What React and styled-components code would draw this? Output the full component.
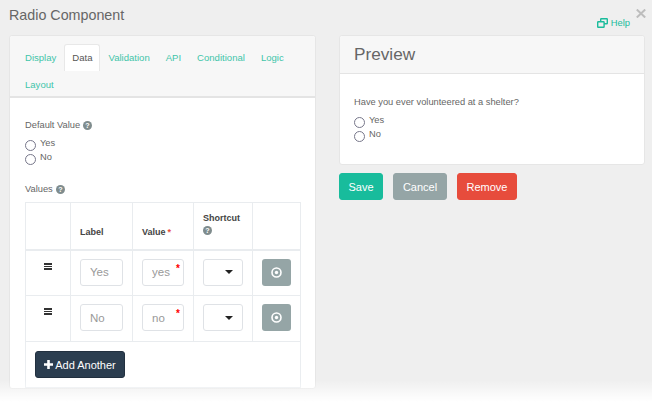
import React from "react";
import styled, { createGlobalStyle } from "styled-components";

const Global = createGlobalStyle`
  html, body { margin: 0; padding: 0; height: 100%; background: #efefef; }
  body { font-family: "Liberation Sans", Arial, sans-serif; overflow: hidden; }
  * { box-sizing: border-box; }
`;

const Page = styled.div`
  position: relative;
  width: 652px;
  height: 402px;
  overflow: hidden;
  background: #efefef;
  color: #666;
`;
const TitleBar = styled.div`
  height: 35px;
  display: flex;
  padding-left: 9px;
`;
const Title = styled.h4`
  margin: 6px 0 0;
  font-size: 14.3px;
  line-height: 18px;
  font-weight: 400;
  color: #666;
`;
const Close = styled.span`
  position: absolute;
  top: 9px;
  right: 6px;
  line-height: 0;
`;
const HelpLink = styled.a`
  position: absolute;
  top: 17px;
  right: 22px;
  display: flex;
  align-items: center;
  gap: 3px;
  font-size: 9.4px;
  line-height: 12px;
  color: #1abc9c;
`;
const Columns = styled.div`
  display: flex;
  align-items: flex-start;
  padding-left: 9px;
  gap: 23px;
`;
const Panel = styled.section`
  width: ${(p) => p.$w}px;
  background: #fff;
  border: 1px solid #e6e6e6;
  border-radius: 3px;
`;
const Tabs = styled.nav`
  background: #f7f7f7;
  border-bottom: 2px solid #e4e4e4;
  height: 62px;
  display: flex;
  flex-wrap: wrap;
  align-content: flex-start;
  padding: 8px 0 0 7px;
  border-radius: 3px 3px 0 0;
`;
const Tab = styled.span`
  height: 27px;
  padding: 0 7px 1px;
  display: flex;
  align-items: center;
  font-size: 9.55px;
  background: ${(p) => (p.$active ? "#fff" : "transparent")};
  color: ${(p) => (p.$active ? "#555" : "#1abc9c")};
  opacity: ${(p) => (p.$active ? 1 : 0.85)};
  border-radius: 3px 3px 0 0;
  border: 1px solid ${(p) => (p.$active ? "#e8e8e8" : "transparent")};
  border-bottom: 0;
`;
const Body = styled.div`
  padding: 21px 15px 0;
`;
const FieldLabel = styled.div`
  display: flex;
  align-items: center;
  gap: 3px;
  font-size: 9.3px;
  line-height: 12px;
  color: #666;
`;
const Radios = styled.div`
  display: flex;
  flex-direction: column;
  margin-top: 7px;
  margin-bottom: ${(p) => p.$bottom}px;
`;
const RadioRow = styled.label`
  display: flex;
  height: 14px;
  font-size: 9.3px;
  line-height: 11px;
  color: #666;
`;
const RadioCircle = styled.span`
  width: 11px;
  height: 11px;
  margin: 2px 4px 0 0;
  border: 1.5px solid #77778a;
  border-radius: 50%;
  background: #fff;
`;
const Table = styled.table`
  width: 275px;
  margin-top: 7px;
  table-layout: fixed;
  border-collapse: collapse;
  border: 1px solid #eaedf0;
  font-size: 10px;
`;
const Th = styled.th`
  height: 47px;
  padding: 0 9px 10px;
  border: 1px solid #e9ecef;
  border-bottom: 2px solid #e9ecef;
  vertical-align: bottom;
  text-align: left;
  font-weight: 700;
  font-size: 9px;
  line-height: 14px;
  color: #444;
  width: ${(p) => p.$w}px;
`;
const Td = styled.td`
  height: 46px;
  padding: 8px 9px;
  border: 1px solid #e9ecef;
  vertical-align: top;
`;
const FooterCell = styled.td`
  height: 46px;
  padding: 9px;
  vertical-align: top;
`;
const Required = styled.span`
  color: #e74c3c;
  margin-left: 2px;
`;
const InputWrap = styled.div`
  position: relative;
  width: ${(p) => p.$w}px;
`;
const TextInput = styled.input`
  display: block;
  width: 100%;
  height: 27px;
  padding: 0 9px;
  font: 11.5px "Liberation Sans", Arial, sans-serif;
  border: 1px solid #dfe2e6;
  border-radius: 3px;
  background: #fff;
  outline: none;
  &::placeholder { color: #999; opacity: 1; }
`;
const Star = styled.span`
  position: absolute;
  top: 4px;
  right: 4px;
  color: #f00;
  font-size: 10px;
  line-height: 12px;
  font-weight: 700;
`;
const SelectBox = styled.div`
  width: 40px;
  height: 27px;
  display: flex;
  align-items: center;
  justify-content: flex-end;
  padding-right: 9px;
  border: 1px solid #dfe2e6;
  border-radius: 3px;
  background: #fff;
`;
const Caret = styled.span`
  width: 0;
  height: 0;
  border-left: 4px solid transparent;
  border-right: 4px solid transparent;
  border-top: 4px solid #222;
`;
const RemoveRow = styled.button`
  width: 29px;
  height: 27px;
  padding: 0;
  display: flex;
  align-items: center;
  justify-content: center;
  background: #95a5a6;
  border: 0;
  border-radius: 3px;
`;
const Drag = styled.span`
  display: block;
  width: 8px;
  height: 7px;
  margin: 4px auto 0;
  border-top: 2px solid #333;
  border-bottom: 2px solid #333;
  position: relative;
  &::after {
    content: "";
    position: absolute;
    left: 0;
    right: 0;
    top: 1px;
    height: 1px;
    background: #333;
  }
`;
const AddButton = styled.button`
  height: 27px;
  width: 90px;
  padding: 0;
  display: flex;
  align-items: center;
  justify-content: center;
  gap: 2px;
  font: 11px "Liberation Sans", Arial, sans-serif;
  color: #fff;
  background: #2c3e50;
  border: 1px solid #22303f;
  border-radius: 3px;
`;
const RightColumn = styled.div`
  width: 306px;
  display: flex;
  flex-direction: column;
  gap: 8px;
`;
const PreviewHead = styled.header`
  height: 38px;
  padding: 0 14px;
  display: flex;
  align-items: center;
  background: #f7f7f7;
  border-bottom: 1px solid #e4e4e4;
  font-size: 17.2px;
  color: #666;
  border-radius: 3px 3px 0 0;
`;
const PreviewBody = styled.div`
  padding: 22px 14px 0;
  height: 90px;
`;
const Actions = styled.div`
  display: flex;
  gap: 10px;
`;
const ActionButton = styled.button`
  height: 27px;
  width: ${(p) => p.$w}px;
  padding: 0;
  font: 11px "Liberation Sans", Arial, sans-serif;
  color: #fff;
  background: ${(p) => p.$bg};
  border: 1px solid ${(p) => p.$bg};
  border-radius: 3px;
`;
const Fade = styled.div`
  position: absolute;
  left: 0;
  right: 0;
  bottom: 0;
  height: 22px;
  background: linear-gradient(to bottom, rgba(255,255,255,0), #fff);
`;

const Q = () => (
  <svg width="9" height="9" viewBox="0 0 10 10">
    <circle cx="5" cy="5" r="5" fill="#7f8c8d" />
    <text x="5" y="8" textAnchor="middle" fontSize="8" fontWeight="700" fontFamily="Liberation Sans" fill="#fff">?</text>
  </svg>
);

const Target = () => (
  <svg width="11" height="11" viewBox="0 0 11 11">
    <circle cx="5.5" cy="5.5" r="4.5" fill="none" stroke="#fff" strokeWidth="1.6" />
    <circle cx="5.5" cy="5.5" r="1.7" fill="#fff" />
  </svg>
);

const Radio = ({ label }) => (
  <RadioRow>
    <RadioCircle />
    {label}
  </RadioRow>
);

const rows = [
  { label: "Yes", value: "yes" },
  { label: "No", value: "no" },
];

export default function App() {
  return (
    <Page>
      <Global />
      <TitleBar>
        <Title>Radio Component</Title>
      </TitleBar>
      <Close>
        <svg width="10" height="9" viewBox="0 0 10 9">
          <path d="M0.8 0.5L9.2 8.5M9.2 0.5L0.8 8.5" stroke="#bdbdbd" strokeWidth="2" />
        </svg>
      </Close>
      <HelpLink>
        <svg width="11" height="10" viewBox="0 0 11 10" fill="none" stroke="#1abc9c" strokeWidth="1.4">
          <rect x="3.7" y="0.7" width="6.6" height="5" rx="0.5" />
          <rect x="0.7" y="3.7" width="6.4" height="5.6" rx="0.5" fill="#efefef" />
        </svg>
        Help
      </HelpLink>
      <Columns>
        <Panel $w={307}>
          <Tabs>
            <Tab>Display</Tab>
            <Tab $active>Data</Tab>
            <Tab>Validation</Tab>
            <Tab>API</Tab>
            <Tab>Conditional</Tab>
            <Tab>Logic</Tab>
            <Tab>Layout</Tab>
          </Tabs>
          <Body>
            <FieldLabel>Default Value <Q /></FieldLabel>
            <Radios $bottom={17}>
              <Radio label="Yes" />
              <Radio label="No" />
            </Radios>
            <FieldLabel>Values <Q /></FieldLabel>
            <Table>
              <thead>
                <tr>
                  <Th $w={45} />
                  <Th $w={62}>Label</Th>
                  <Th $w={61}>Value<Required>*</Required></Th>
                  <Th $w={59}>Shortcut<br /><Q /></Th>
                  <Th $w={48} />
                </tr>
              </thead>
              <tbody>
                {rows.map((r) => (
                  <tr key={r.value}>
                    <Td><Drag /></Td>
                    <Td><InputWrap $w={43}><TextInput placeholder={r.label} readOnly /></InputWrap></Td>
                    <Td>
                      <InputWrap $w={42}>
                        <TextInput placeholder={r.value} readOnly />
                        <Star>*</Star>
                      </InputWrap>
                    </Td>
                    <Td><SelectBox><Caret /></SelectBox></Td>
                    <Td><RemoveRow><Target /></RemoveRow></Td>
                  </tr>
                ))}
                <tr>
                  <FooterCell colSpan={5}>
                    <AddButton>
                      <svg width="9" height="9" viewBox="0 0 9 9"><path d="M4.5 0V9M0 4.5H9" stroke="#fff" strokeWidth="2.6" /></svg>
                      Add Another
                    </AddButton>
                  </FooterCell>
                </tr>
              </tbody>
            </Table>
          </Body>
        </Panel>
        <RightColumn>
          <Panel $w={306}>
            <PreviewHead>Preview</PreviewHead>
            <PreviewBody>
              <FieldLabel>Have you ever volunteered at a shelter?</FieldLabel>
              <Radios $bottom={0}>
                <Radio label="Yes" />
                <Radio label="No" />
              </Radios>
            </PreviewBody>
          </Panel>
          <Actions>
            <ActionButton $w={44} $bg="#18bc9c">Save</ActionButton>
            <ActionButton $w={54} $bg="#95a5a6">Cancel</ActionButton>
            <ActionButton $w={60} $bg="#e74c3c">Remove</ActionButton>
          </Actions>
        </RightColumn>
      </Columns>
      <Fade />
    </Page>
  );
}
